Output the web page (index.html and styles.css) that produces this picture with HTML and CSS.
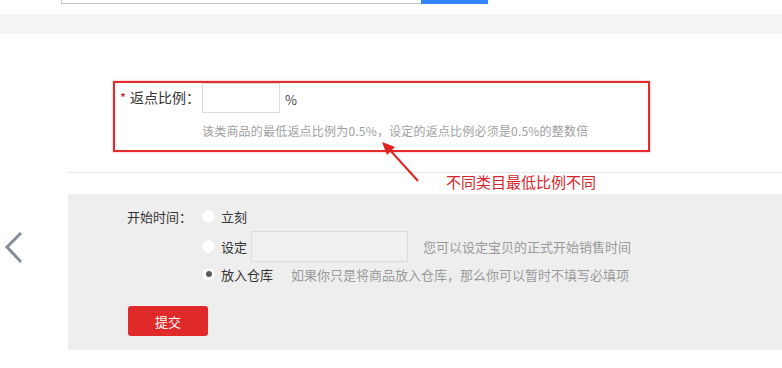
FILE: index.html
```html
<!DOCTYPE html>
<html lang="zh-CN">
<head>
<meta charset="utf-8">
<title>返点比例</title>
<link rel="stylesheet" href="styles.css">
</head>
<body>
<div class="page">
  <div class="topbar">
    <div class="search-box"></div>
    <div class="search-btn"></div>
  </div>
  <div class="band"></div>

  <div class="rebate-box">
    <div class="rebate-row">
      <div class="rebate-label"><span class="star">*</span>返点比例：</div>
      <div class="rebate-input"></div>
      <span class="unit">%</span>
    </div>
    <div class="rebate-hint">该类商品的最低返点比例为0.5%，设定的返点比例必须是0.5%的整数倍</div>
  </div>

  <div class="divider"></div>

  <div class="panel">
    <div class="row row-first">
      <div class="field-label">开始时间：</div>
      <span class="radio"></span>
      <span class="opt">立刻</span>
    </div>
    <div class="row row-set">
      <div class="field-label"></div>
      <span class="radio"></span>
      <span class="opt">设定</span>
      <div class="time-input"></div>
      <span class="tip tip-set">您可以设定宝贝的正式开始销售时间</span>
    </div>
    <div class="row">
      <div class="field-label"></div>
      <span class="radio checked"></span>
      <span class="opt">放入仓库</span>
      <span class="tip tip-store">如果你只是将商品放入仓库，那么你可以暂时不填写必填项</span>
    </div>
    <div class="actions">
      <button class="submit" type="button">提交</button>
    </div>
  </div>

  <svg class="arrow" width="50" height="50" viewBox="0 0 50 50">
    <line x1="44" y1="46" x2="15" y2="14" stroke="#e02222" stroke-width="2"/>
    <polygon points="8,7 21,12 13,20" fill="#e02222"/>
  </svg>
  <div class="annotation">不同类目最低比例不同</div>

  <svg class="chevron" width="22" height="36" viewBox="0 0 22 36">
    <polyline points="19,3 5,17 19,32" fill="none" stroke="#858d99" stroke-width="3"/>
  </svg>
</div>
</body>
</html>
```

FILE: styles.css
```css
* { box-sizing: border-box; }
html, body { margin: 0; padding: 0; background: #fff; }
body {
  font-family: "Noto Sans CJK SC", "Noto Sans", sans-serif;
  color: #333;
  width: 782px;
  overflow: hidden;
}
.page { position: relative; width: 782px; height: 368px; }

.topbar { display: flex; height: 4px; padding-left: 61px; }
.search-box {
  width: 360px;
  border-left: 1px solid #c4c4c4;
  border-bottom: 1px solid #c4c4c4;
}
.search-btn { width: 67px; background: #3385ff; }

.band { margin-top: 10px; height: 20px; background: #f5f5f5; }

.rebate-box {
  margin: 47px 0 0 113px;
  width: 537px;
  height: 71px;
  border: 2px solid #e52b2b;
  box-shadow: 0 0 2px rgba(229, 43, 43, 0.45);
}
.rebate-row { display: flex; align-items: center; height: 30px; }
.rebate-label {
  width: 87px;
  padding-left: 5px;
  font-size: 14px;
  line-height: 20px;
  color: #333;
  white-space: nowrap;
  margin-top: -2px;
}
.star { color: #d42020; font-size: 13px; margin-right: 4px; }
.rebate-input {
  width: 78px;
  height: 30px;
  border: 1px solid #dcdcdc;
  background: #fff;
}
.unit { margin-left: 5px; font-size: 13px; color: #444; padding-top: 2px; }
.rebate-hint {
  margin: 10px 0 0 87px;
  font-size: 12px;
  line-height: 16px;
  letter-spacing: 0.2px;
  color: #a0a0a0;
  white-space: nowrap;
}

.divider { margin: 20px 0 0 68px; height: 1px; background: #e6e6e6; }

.panel {
  margin: 21px 0 0 68px;
  height: 156px;
  background: #eeeeee;
  padding-top: 10px;
}
.row { display: flex; align-items: center; height: 24px; font-size: 13px; }
.row-set { height: 32px; margin-top: 2px; }
.field-label {
  width: 126px;
  text-align: right;
  padding-right: 2px;
  color: #333;
  white-space: nowrap;
}
.radio {
  width: 13px;
  height: 13px;
  border-radius: 50%;
  background: #fff;
  margin-left: 8px;
  display: flex;
  align-items: center;
  justify-content: center;
  box-shadow: 0 0 1px rgba(0, 0, 0, 0.12);
}
.radio.checked::after {
  content: "";
  width: 6px;
  height: 6px;
  border-radius: 50%;
  background: #5a5a5a;
}
.opt { margin-left: 6px; color: #333; white-space: nowrap; }
.time-input {
  margin-left: 4px;
  width: 157px;
  height: 31px;
  border: 1px solid #dcdcdc;
  background: #f0f0f0;
}
.tip { color: #9a9a9a; white-space: nowrap; }
.tip-set { margin-left: 15px; }
.tip-store { margin-left: 18px; }

.actions { padding-left: 60px; margin-top: 20px; }
.submit {
  width: 80px;
  height: 30px;
  border: none;
  border-radius: 3px;
  background: #e02a2a;
  color: #fff;
  font-family: inherit;
  font-size: 13px;
  padding: 0;
}

.arrow { position: absolute; left: 374px; top: 135px; }
.annotation {
  position: absolute;
  left: 446px;
  top: 172px;
  font-size: 15px;
  line-height: 20px;
  color: #d8232a;
  white-space: nowrap;
}
.chevron { position: absolute; left: 2px; top: 230px; }
```
